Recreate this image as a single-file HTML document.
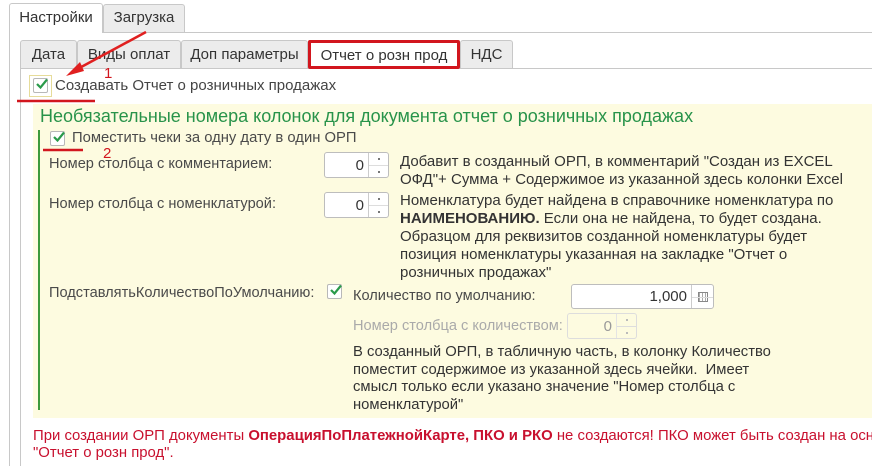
<!DOCTYPE html>
<html><head><meta charset="utf-8"><style>
*{margin:0;padding:0;box-sizing:border-box}
body{width:872px;height:466px;background:#fff;position:relative;overflow:hidden;font-family:"Liberation Sans","DejaVu Sans",sans-serif;font-size:14.6px;color:#4a4a4a}
.a{position:absolute;white-space:nowrap}
.tab{position:absolute;border:1px solid #c8c8c8;border-bottom:none;border-radius:3px 3px 0 0;background:#ececec;color:#333;font-size:15px;text-align:center}
.cb{position:absolute;width:15px;height:15px;border:1px solid #b8b8b8;background:#fff;border-radius:2px}
.cb svg{position:absolute;left:1px;top:-2px}
.spin{position:absolute;border:1px solid #bdbdbd;border-radius:3px;background:#fff;height:26px}
.spin .v{position:absolute;right:24px;top:4px;font-size:15px;color:#333}
.spin .b{position:absolute;right:0;top:0;width:20px;height:100%;border-left:1px solid #ccc}
.spin .b:after{content:"";position:absolute;left:0;right:0;top:12px;border-top:1px solid #ddd}
.spin .b i{position:absolute;left:9px;width:2px;height:2px;background:#777}
</style></head><body>
<div class="a" style="left:9px;top:32px;width:1px;height:434px;background:#c8c8c8"></div>
<div class="a" style="left:9px;top:32px;width:863px;height:1px;background:#c8c8c8"></div>
<div class="a" style="left:20px;top:68px;width:1px;height:398px;background:#c8c8c8"></div>
<div class="a" style="left:20px;top:68px;width:852px;height:1px;background:#c8c8c8"></div>
<div class="tab" style="left:9px;top:3px;width:94px;height:30px;background:#fff;line-height:28px">Настройки</div>
<div class="tab" style="left:103px;top:4px;width:82px;height:28px;line-height:26px">Загрузка</div>
<div class="tab" style="left:20px;top:40px;width:57px;height:28px;line-height:27px">Дата</div>
<div class="tab" style="left:77px;top:40px;width:104px;height:28px;line-height:27px">Виды оплат</div>
<div class="tab" style="left:181px;top:40px;width:127px;height:28px;line-height:27px">Доп параметры</div>
<div class="tab" style="left:308px;top:40px;width:152px;height:29px;line-height:25px;background:#fff;border:3px solid #d2161e;border-radius:2px">Отчет о розн прод</div>
<div class="tab" style="left:460px;top:40px;width:53px;height:28px;line-height:27px">НДС</div>
<div class="a" style="left:33px;top:104px;width:839px;height:314px;background:#fdfbe0"></div>
<div class="a" style="left:38px;top:130px;width:2px;height:280px;background:#3c9a3c"></div>
<div class="a" style="left:29px;top:75px;width:23px;height:22px;border:1px solid #e6dc9a"></div>
<div class="cb" style="left:33px;top:78px"><svg width="14" height="14" viewBox="0 0 14 14"><path d="M2 7l3.5 3.5L12 2.5" stroke="#2a9a4a" stroke-width="2.2" fill="none"/></svg></div>
<div class="a" style="left:55px;top:77px;font-size:15px;color:#444">Создавать Отчет о розничных продажах</div>
<div class="a" style="left:40px;top:106px;font-size:18px;color:#28934a">Необязательные номера колонок для документа отчет о розничных продажах</div>
<div class="cb" style="left:50px;top:131px"><svg width="14" height="14" viewBox="0 0 14 14"><path d="M2 7l3.5 3.5L12 2.5" stroke="#2a9a4a" stroke-width="2.2" fill="none"/></svg></div>
<div class="a" style="left:72px;top:130px;font-size:14.8px">Поместить чеки за одну дату в один ОРП</div>
<div class="a" style="left:49px;top:156px">Номер столбца с комментарием:</div>
<div class="a" style="left:49px;top:196px">Номер столбца с номенклатурой:</div>
<div class="spin" style="left:324px;top:152px;width:65px"><span class="v">0</span><span class="b"><i style="top:5px"></i><i style="top:18px"></i></span></div>
<div class="spin" style="left:324px;top:192px;width:65px"><span class="v">0</span><span class="b"><i style="top:5px"></i><i style="top:18px"></i></span></div>
<div class="a" style="left:400px;top:153px;line-height:18px;color:#333;font-size:15px">Добавит в созданный ОРП, в комментарий "Создан из EXCEL<br>ОФД"+ Сумма + Содержимое из указанной здесь колонки Excel</div>
<div class="a" style="left:400px;top:192px;line-height:18px;color:#333;font-size:15px">Номенклатура будет найдена в справочнике номенклатура по<br><b>НАИМЕНОВАНИЮ.</b> Если она не найдена, то будет создана.<br>Образцом для реквизитов созданной номенклатуры будет<br>позиция номенклатуры указанная на закладке "Отчет о<br>розничных продажах"</div>
<div class="a" style="left:49px;top:285px">ПодставлятьКоличествоПоУмолчанию:</div>
<div class="cb" style="left:327px;top:284px"><svg width="14" height="14" viewBox="0 0 14 14"><path d="M2 7l3.5 3.5L12 2.5" stroke="#2a9a4a" stroke-width="2.2" fill="none"/></svg></div>
<div class="a" style="left:353px;top:288px">Количество по умолчанию:</div>
<div class="spin" style="left:571px;top:284px;width:143px;height:25px"><span class="v" style="right:26px;top:3px">1,000</span><span class="b" style="width:22px"><span style="position:absolute;left:6px;top:7px;width:10px;height:10px;border:1px solid #888;background:repeating-linear-gradient(90deg,#aaa 0 1px,#fff 1px 3px)"></span></span></div>
<div class="a" style="left:353px;top:318px;color:#aaa">Номер столбца с количеством:</div>
<div class="spin" style="left:567px;top:313px;width:70px;border-color:#ddd;background:#fdfbe0"><span class="v" style="color:#999">0</span><span class="b" style="border-color:#e4e4e4"><i style="top:5px;background:#bbb"></i><i style="top:18px;background:#bbb"></i></span></div>
<div class="a" style="left:353px;top:344px;line-height:17.7px;color:#333;font-size:14.8px">В созданный ОРП, в табличную часть, в колонку Количество<br>поместит содержимое из указанной здесь ячейки.&nbsp; Имеет<br>смысл только если указано значение "Номер столбца с<br>номенклатурой"</div>
<div class="a" style="left:33px;top:428px;width:839px;height:36px;overflow:hidden"><div style="line-height:17px;color:#c8102e;font-size:14.9px;white-space:nowrap">При создании ОРП документы <b>ОперацияПоПлатежнойКарте, ПКО и РКО</b> не создаются! ПКО может быть создан на основании<br>"Отчет о розн прод".</div></div>
<svg class="a" style="left:0;top:0" width="872" height="466">
<line x1="146" y1="32" x2="72" y2="72" stroke="#e02020" stroke-width="2.5"/>
<polygon points="66,76 80,62 84,71" fill="#e02020"/>
<line x1="17" y1="101" x2="95" y2="101" stroke="#d2161e" stroke-width="2.5"/>
<line x1="43" y1="150" x2="83" y2="150" stroke="#d2161e" stroke-width="2.5"/>
<text x="104" y="78" fill="#d2161e" font-family="Liberation Sans" font-size="15">1</text>
<text x="103" y="158" fill="#d2161e" font-family="Liberation Sans" font-size="15">2</text>
</svg>
</body></html>
